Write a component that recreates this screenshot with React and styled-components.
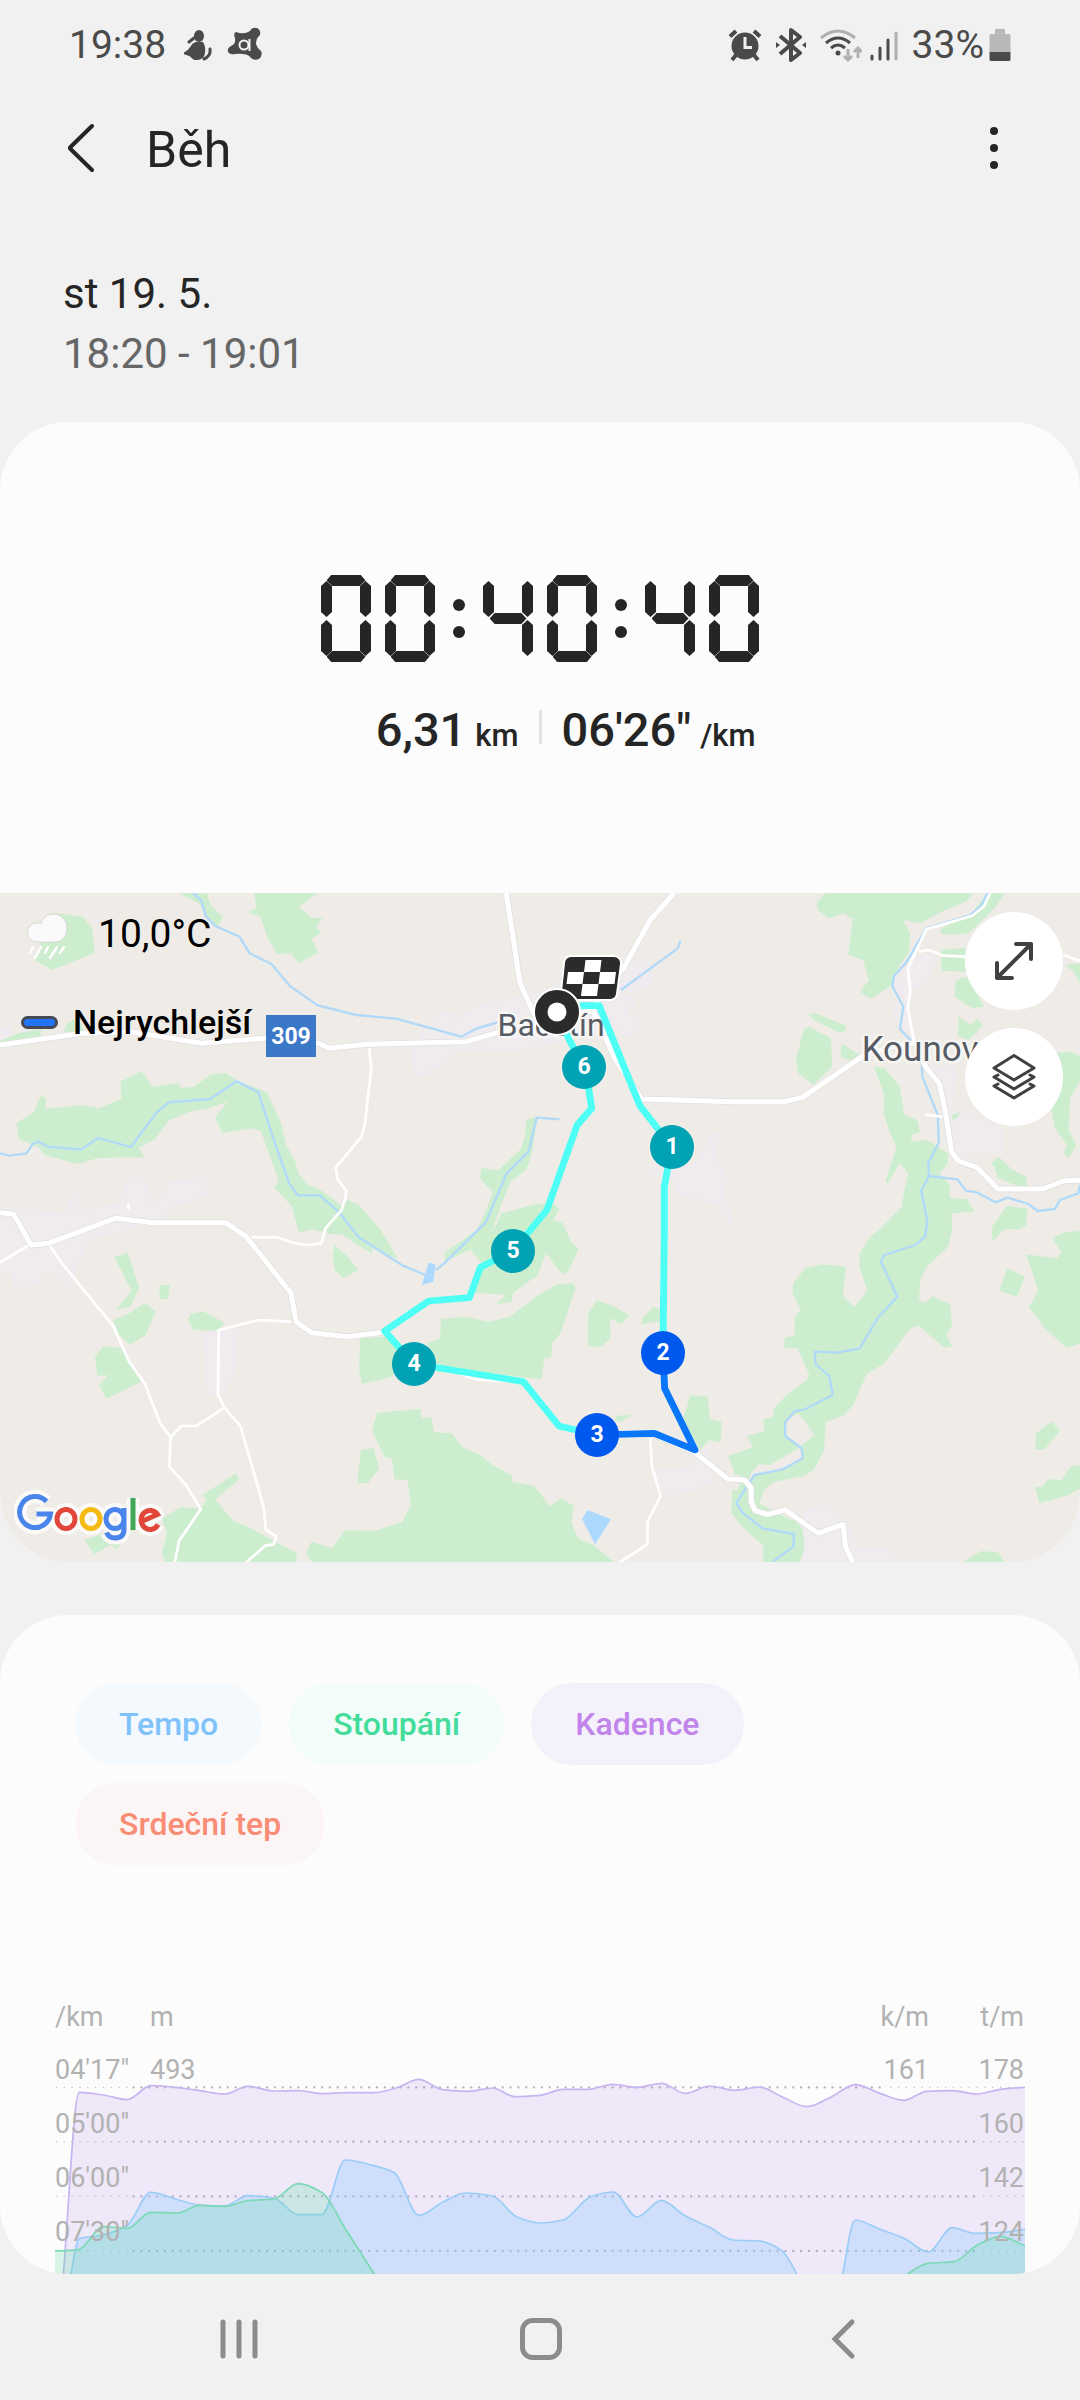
import React from "react";
import styled, { createGlobalStyle } from "styled-components";

const GlobalStyle = createGlobalStyle`
  *, *::before, *::after { box-sizing: border-box; }
  body {
    margin: 0;
    background: #f1f1f1;
    color: #252525;
    font-family: Roboto, "Noto Sans", sans-serif;
  }
  button { font: inherit; color: inherit; border: 0; padding: 0; background: none; cursor: pointer; }
  svg { display: block; }
`;

const Screen = styled.div`
  display: flex;
  flex-direction: column;
  min-height: 100vh;
`;

/* ---------- status bar ---------- */

const StatusBar = styled.div`
  display: flex;
  align-items: center;
  justify-content: space-between;
  height: 90px;
  padding: 0 69px 0 69px;
  color: #4a4a4a;
  font-size: 39px;
  line-height: 44px;
`;

const StatusGroup = styled.div`
  display: flex;
  align-items: center;
  gap: ${(p) => p.$gap}px;
`;

/* ---------- header ---------- */

const AppBar = styled.header`
  display: flex;
  align-items: center;
  height: 115px;
  padding: 0 62px 0 57px;
`;

const IconButton = styled.button`
  display: grid;
  place-items: center;
  width: 48px;
  height: 64px;
`;

const Title = styled.h1`
  flex: 1;
  margin: 0 0 0 41px;
  padding-top: 4px;
  font-size: 50px;
  line-height: 60px;
  font-weight: 400;
`;

const DateBlock = styled.section`
  padding: 59px 63px 38px;
  font-size: 42px;
  line-height: 60px;
`;

const DateLine = styled.div`
  color: ${(p) => (p.$muted ? "#666666" : "#252525")};
`;

/* ---------- cards ---------- */

const Card = styled.section`
  overflow: hidden;
  border-radius: 68px;
  background: #fcfcfc;
  & + & { margin-top: 53px; }
`;

const Summary = styled.div`
  display: flex;
  flex-direction: column;
  align-items: center;
  gap: 38px;
  padding: 153px 0 133px;
`;

const Clock = styled.div`
  display: flex;
  gap: 14px;
`;

const Digit = styled.span`
  display: grid;
  width: 50px;
  height: 87px;
`;

const Bar = styled.i`
  grid-area: 1 / 1;
  justify-self: center;
  align-self: ${(p) => p.$align};
  width: ${(p) => (p.$align === "center" ? 37 : 39)}px;
  height: 11px;
  background: #252525;
  clip-path: ${(p) =>
    p.$align === "start"
      ? "polygon(0 50%, 12% 0, 88% 0, 100% 50%, 85% 100%, 15% 100%)"
      : p.$align === "end"
        ? "polygon(0 50%, 15% 0, 85% 0, 100% 50%, 88% 100%, 12% 100%)"
        : "polygon(0 50%, 14% 0, 86% 0, 100% 50%, 86% 100%, 14% 100%)"};
`;

const Post = styled.i`
  grid-area: 1 / 1;
  justify-self: ${(p) => p.$side};
  align-self: ${(p) => p.$align};
  width: 11px;
  height: 36px;
  margin: 6px 0;
  background: #252525;
  clip-path: polygon(50% 0, 100% 14%, 100% 86%, 50% 100%, 0 86%, 0 14%);
`;

const Colon = styled.span`
  display: flex;
  flex-direction: column;
  align-items: center;
  justify-content: center;
  gap: 15px;
  width: 20px;
  height: 87px;
  &::before, &::after {
    content: "";
    width: 12px;
    height: 12px;
    border-radius: 50%;
    background: #252525;
  }
`;

const Stats = styled.div`
  display: grid;
  grid-template-columns: 1fr 3px 1fr;
  column-gap: 20px;
  width: 100%;
  height: 60px;
  line-height: 60px;
`;

const Stat = styled.div`
  text-align: ${(p) => p.$align};
  font-size: 47px;
  font-weight: 500;
  small { margin-left: 9px; font-size: 31px; line-height: 32px; }
`;

const Divider = styled.span`
  height: 34px;
  margin-top: 10px;
  background: #e3e3e3;
`;

/* ---------- map ---------- */

const MapFrame = styled.div`
  position: relative;
  aspect-ratio: 1080 / 669;
  overflow: hidden;
  background: #efece7;
`;

const MapDrawing = styled.svg`
  width: 100%;
  height: 100%;
`;

const Pin = styled.div`
  position: absolute;
  left: ${(p) => (p.$x / 1080) * 100}%;
  top: ${(p) => (p.$y / 669) * 100}%;
  transform: translate(-50%, -50%);
`;

const KmPin = styled(Pin)`
  display: grid;
  place-items: center;
  width: 44px;
  height: 44px;
  border-radius: 50%;
  background: ${(p) => (p.$fast ? "#0059ef" : "#00a2b4")};
  color: #fff;
  font-size: 23px;
  line-height: 28px;
  font-weight: 700;
`;

const Place = styled(Pin)`
  color: #565b64;
  font-size: ${(p) => p.$size}px;
  line-height: 40px;
  white-space: nowrap;
  text-shadow: 0 0 3px #fff, 2px 2px 2px #f6f5f3, -2px -2px 2px #f6f5f3, 2px -2px 2px #f6f5f3, -2px 2px 2px #f6f5f3;
`;

const RoadSign = styled(Pin)`
  width: 50px;
  height: 42px;
  background: #3b78c8;
  color: #fff;
  font-size: 23px;
  line-height: 43px;
  font-weight: 700;
  text-align: center;
`;

const MapLegend = styled.div`
  position: absolute;
  top: 14px;
  left: 21px;
  display: flex;
  flex-direction: column;
  gap: 41px;
  color: #000;
`;

const Weather = styled.div`
  display: flex;
  align-items: center;
  gap: 23px;
  padding-left: 4px;
  font-size: 39px;
  line-height: 54px;
`;

const PaceKey = styled.div`
  display: flex;
  align-items: center;
  gap: 15px;
  font-size: 34px;
  line-height: 40px;
  font-weight: 500;
  &::before {
    content: "";
    width: 37px;
    height: 13px;
    border: 3px solid #454a55;
    border-radius: 7px;
    background: #2374fb;
  }
`;

const MapTools = styled.div`
  position: absolute;
  top: 19px;
  right: 17px;
  display: flex;
  flex-direction: column;
  gap: 18px;
`;

const RoundButton = styled.button`
  display: grid;
  place-items: center;
  width: 98px;
  height: 98px;
  border-radius: 50%;
  background: #fff;
`;

const Attribution = styled.div`
  position: absolute;
  left: 14px;
  bottom: 15px;
`;

/* ---------- chart card ---------- */

const Chips = styled.div`
  display: flex;
  flex-wrap: wrap;
  gap: 18px 27px;
  padding: 68px 75px 126px;
`;

const Chip = styled.button`
  height: 82px;
  padding: 0 44px;
  border-radius: 41px;
  background: ${(p) => p.$bg};
  color: ${(p) => p.$ink};
  font-size: 32px;
  line-height: 40px;
  font-weight: 500;
`;

const Chart = styled.div`
  padding: 0 55px;
  color: #b2b2b2;
  font-size: 27px;
`;

const AxisRow = styled.div`
  display: grid;
  grid-template-columns: 95px 1fr 1fr 95px;
  height: ${(p) => (p.$head ? 52 : 54)}px;
  line-height: ${(p) => (p.$head ? 52 : 54)}px;
  padding-right: 1px;
  span:nth-child(n + 3) { text-align: right; }
`;

const Plot = styled.div`
  display: grid;
  height: 231px;
`;

const Curves = styled.svg`
  grid-area: 1 / 1;
  align-self: end;
  width: 100%;
  height: 204px;
`;

const AxisLabels = styled.div`
  grid-area: 1 / 1;
  z-index: 1;
`;

/* ---------- navigation ---------- */

const NavBar = styled.nav`
  display: grid;
  grid-template-columns: repeat(3, 1fr);
  height: 126px;
  padding: 4px 86px 0 88px;
`;

const NavButton = styled.button`
  display: grid;
  place-items: center;
`;

/* ---------- seven segment clock ---------- */

const SEGMENTS = { 0: "abcdef", 4: "bcfg" };

function SegmentDigit({ value }) {
  const on = (s) => SEGMENTS[value].includes(s);
  return (
    <Digit>
      {on("a") && <Bar $align="start" />}
      {on("g") && <Bar $align="center" />}
      {on("d") && <Bar $align="end" />}
      {on("f") && <Post $side="start" $align="start" />}
      {on("b") && <Post $side="end" $align="start" />}
      {on("e") && <Post $side="start" $align="end" />}
      {on("c") && <Post $side="end" $align="end" />}
    </Digit>
  );
}

function SegmentClock({ value }) {
  return (
    <Clock role="timer" aria-label={value}>
      {value.split("").map((c, i) => (c === ":" ? <Colon key={i} /> : <SegmentDigit key={i} value={c} />))}
    </Clock>
  );
}

/* ---------- map data: four tiles of 1568 x 1020 units ---------- */

const TILES = [
  {
    at: [0, 0],
    urban: [
      "60,980 180,1000 240,902 225,990 345,970 365,900 395,868 430,920 445,975 495,905 600,883 608,945 500,985 470,1015 340,1060 250,1085 250,1110 195,1225 160,1180 120,1180 115,1210 75,1228 40,1218 30,1180 0,1180 0,980",
      "1190,505 1265,400 1310,390 1325,410 1400,370 1568,335 1808,250 1878,235 1903,300 1860,335 1803,330 1853,360 1820,400 1873,420 1828,475 1768,440 1568,500 1470,515 1330,510 1235,592 1200,590",
      "0,440 35,435 30,475 0,485",
    ],
    green: [
      "520,39 600,39 612,75 648,112 630,140 597,110 580,72",
      "738,39 920,39 868,80 905,113 937,115 918,140 933,157 905,178 923,218 866,250 845,220 805,222 775,170 757,110 723,98 745,82",
      "155,98 240,110 268,145 275,218 152,270 100,240 130,160",
      "185,455 195,430 225,413 245,455",
      "0,482 60,458 120,448 118,472 0,490",
      "48,728 98,697 120,643 135,660 130,687 235,675 285,685 352,658 350,605 412,573 443,620 520,608 523,625 563,620 612,583 655,578 690,603 775,637 815,725 830,795 855,838 868,882 890,912 935,933 990,975 1010,960 1040,972 1105,1050 1157,1138 1080,1105 1080,1122 990,1062 960,1063 910,1048 868,1058 858,1020 848,980 797,922 810,905 757,752 730,745 645,760 625,713 660,665 610,683 550,695 492,720 450,778 402,803 421,832 285,834 225,852 130,825 110,800 55,777",
      "1560,710 1528,720 1525,765 1512,808 1445,872 1398,863 1393,895 1430,935 1412,990 1385,1050 1290,1118 1293,1145 1365,1108 1408,1085 1425,1060 1440,1020 1455,975 1482,905 1530,868 1545,815",
      "1455,1000 1568,970 1605,972 1625,985 1610,1015 1600,1060 1585,1120 1562,1185 1490,1238 1485,1265 1440,1272 1470,1245 1375,1238 1400,1150 1365,1108 1408,1085 1425,1060 1445,1025",
    ],
    water: [
      "560,39 585,62 597,107 625,138 695,170 725,220 788,252 842,318 922,376 1035,405 1150,416 1340,470 1385,445 1445,427",
      "0,820 28,827 77,820 95,792 110,785 140,800 235,809 285,774 380,801 455,697 490,667 610,657 687,604 750,637 800,795 840,910 865,946 928,946 985,997 1040,1070 1170,1157 1235,1185",
      "1265,1170 1290,1150 1412,1025 1470,882 1535,815 1558,713 1625,718",
    ],
    road: [
      "0,495 240,460 380,455 585,490 770,475 925,490 955,505 1065,493 1355,485 1445,457 1568,425 1730,390",
      "1470,39 1510,310 1568,440",
      "0,998 40,1003 90,1095 140,1090 335,1015 445,1028 655,1028 715,1070 845,1240 860,1325 905,1358 1010,1370 1117,1356",
    ],
    lane: [
      "1072,505 1078,565 1060,730 1050,770 975,862 980,897 1005,932 1003,955 992,990 945,1045 933,1090 890,1095 845,1087 805,1072 728,1072",
      "373,970 373,988",
    ],
  },
  {
    at: [1568, 0],
    urban: [
      "500,755 520,760 515,830 545,885 535,960 565,1010 555,1040 515,975 400,945 380,895 300,880 330,860 440,860",
      "1085,240 1150,215 1150,250 1110,320 1075,330 1075,400 1090,470 1060,450 1020,400 1040,360 1025,310",
      "1120,560 1210,555 1205,640 1190,700 1250,690 1290,720 1345,745 1345,820 1250,820 1220,870 1190,800 1170,640",
    ],
    green: [
      "830,39 1260,39 1235,65 1165,95 1105,130 1055,120 1075,160 1072,215 1040,262 1022,315 960,357 930,335 955,300 938,240 895,225 908,118 882,100 838,115 805,88 805,65",
      "1165,210 1235,203 1245,275 1165,273",
      "1165,145 1250,103 1300,39 1350,39 1320,85 1245,160 1200,165 1163,160",
      "1208,300 1240,290 1290,380 1255,385 1203,350",
      "1215,410 1250,435 1270,415 1287,437 1245,480 1215,470",
      "778,402 800,400 885,435 890,452 870,458 800,422",
      "765,450 780,440 845,475 848,560 795,615 750,580 743,540",
      "875,490 935,530 900,540 872,530",
      "970,560 1000,565 1045,620 1058,705 1095,720 1103,755 1080,765 1078,785 1125,780 1185,820 1185,850 1160,880 1190,915 1190,955 1240,958 1262,995 1195,1000 1197,1050 1185,1100 1120,1165 1105,1200 1100,1260 1120,1268 1140,1248 1190,1272 1197,1335 1180,1365 1197,1400 1175,1403 1100,1338 1075,1345 1000,1450 948,1483 910,1575 880,1608 830,1625 825,1710 795,1770 765,1788 680,1805 650,1830 637,1870 700,1905 745,1925 763,1950 768,2005 755,2046 648,2046 648,1995 600,1955 555,1900 558,1832 575,1830 585,1785 567,1785 547,1728 620,1700 600,1668 652,1653 648,1618 675,1612 680,1585 715,1545 775,1500 782,1485 748,1405 710,1405 710,1375 740,1365 740,1310 758,1290 733,1240 735,1210 770,1165 820,1153 888,1160 880,1248 912,1282 950,1232 928,1160 928,1120 955,1075 985,1050 1050,980 1058,930 1070,880 1045,850 1010,910 1003,905 1035,800 1015,755 998,700 998,640",
      "1500,518 1545,515 1568,530 1568,605 1540,650 1535,750 1558,795 1535,833 1520,820 1530,795 1495,745 1485,690 1505,640 1510,580",
      "1320,860 1308,850 1333,830 1370,868 1412,890 1415,918 1385,918 1330,895",
      "1195,705 1222,697 1200,725",
      "1355,978 1415,985 1412,1035 1395,1048 1350,1048 1313,1085 1313,1040",
      "1525,255 1568,250 1568,310 1550,275",
    ],
    water: [
      "235,330 400,205 408,183",
      "1300,39 1282,75 1250,105 1122,145 1065,245 1028,288 1023,318 1055,380 1045,447 1085,490 1108,530 1110,590 1155,705 1158,787 1127,850 1130,888 1107,932 1125,1025 1118,1070 1090,1095 1000,1125 990,1145 1038,1250 980,1315 928,1405 865,1418 798,1415 800,1452 840,1488 850,1545 770,1588 740,1593 712,1627 712,1668 760,1705 763,1735 705,1768 623,1785 597,1825 570,1870 590,1900 648,1946 738,1962 735,2000 675,2046",
      "1130,888 1212,898 1237,932 1268,937 1323,967 1358,953 1418,972 1445,993 1495,987 1510,960 1563,940 1568,915",
    ],
    road: [
      "390,39 320,120 245,260 150,385 220,540 295,657 560,665 710,665 762,652 935,530 1020,500 1085,490",
      "1085,480 1120,560 1160,612 1178,700 1195,815 1215,843 1270,863 1330,927 1460,927 1520,903 1568,900",
    ],
    lane: [
      "1307,39 1290,78 1255,107 1122,148 1068,265 1075,330 1068,385 1085,480",
      "1100,215 1130,210 1170,227 1235,230",
      "1520,225 1568,243",
      "1118,703 1170,711",
    ],
  },
  {
    at: [0, 1020],
    urban: ["588,340 695,322 685,460 650,525 600,520"],
    green: [
      "1240,370 1278,355 1280,297 1350,290 1420,305 1480,290 1568,222 1618,192 1665,190 1671,205 1628,338 1603,370 1601,410 1580,418 1573,478 1535,475 1265,435",
      "1045,355 1120,350 1160,385 1140,470 1052,492 1043,455",
      "332,110 372,98 404,203 378,262 335,270 382,213",
      "463,195 493,195 488,238 463,238",
      "328,300 378,278 423,248 452,275 423,345 378,374 345,345",
      "275,410 300,379 350,383 410,485 310,536 287,495 315,465 283,468",
      "545,300 553,282 590,274 652,308 635,332 562,330",
      "965,105 972,75 1010,110 1040,150 997,175 973,152",
      "1095,578 1220,567 1225,595 1252,592 1260,637 1312,640 1345,683 1395,705 1430,735 1485,765 1488,785 1552,798 1596,858 1628,835 1666,858 1660,908 1678,955 1723,975 1783,1026 905,1026 890,1000 903,965 963,985 1003,930 1090,932 1168,905 1193,855 1183,780 1145,778 1138,715 1118,712 1080,632",
      "1048,690 1085,684 1101,745 1068,790 1037,790",
      "588,825 685,760 695,778 625,838 680,905 720,920 862,1000 860,1026 480,1026 470,1000 485,940 470,895 525,862 583,865 600,840",
      "245,960 300,940 360,955 340,988 320,975 275,1003",
    ],
    water: [],
    pond: ["1245,128 1265,133 1258,185 1225,195 1235,160"],
    road: [],
    lane: [
      "0,128 80,78",
      "145,78 180,130 330,320 375,425 420,490 465,610 495,652 492,740 540,795 583,868 520,962 507,1030",
      "495,652 527,618 570,618 652,563",
      "845,305 752,300 635,330 633,525 652,563 698,618 735,750 765,860 772,928 802,950 795,973 770,977 712,1030",
      "1270,435 1380,478 1520,487",
    ],
  },
  {
    at: [1568, 1020],
    urban: [
      "330,750 440,740 480,680 500,720 500,790 430,820 360,828",
      "765,870 840,848 880,890 915,950 925,985 1010,980 1045,1026 765,1026",
    ],
    green: [
      "40,0 65,8 90,65 112,88 85,150 65,163 17,100 25,40",
      "1488,55 1520,38 1568,32 1568,370 1530,385 1465,325 1420,262 1447,212 1412,103 1500,115 1515,98",
      "1357,145 1407,170 1385,230 1333,213",
      "1440,640 1485,605 1510,632 1465,688 1438,688",
      "1438,802 1460,800 1475,778 1515,780 1540,740 1568,735 1568,805 1535,825 1450,850",
      "1230,1026 1280,993 1330,997 1350,1026",
      "140,380 140,280 165,240 220,262 260,287 237,312 203,295 205,355 178,380",
      "293,312 300,290 330,260 350,270 350,302",
      "437,525 487,530 493,597 527,605 525,667 490,660 465,690 415,600",
      "215,600 225,587 270,583 235,605",
    ],
    clearing: [
      "750,580 797,645 755,680 712,645 712,605",
      "755,682 760,715 700,750 620,765 605,785 612,760 635,733 668,735",
    ],
    pond: ["138,870 206,898 160,973 122,897"],
    water: [],
    road: [
      "332,645 450,697 545,777 595,780 613,805 613,845 625,872 660,883 712,870 808,940 880,913 887,980 910,1030",
    ],
    lane: ["320,655 325,740 350,828 313,903 312,973 230,1028"],
  },
];

const at = (t) => `translate(${t.at[0]} ${t.at[1]})`;

function Shapes({ layer, fill }) {
  return TILES.map((t, i) => (
    <g key={i} transform={at(t)} fill={fill}>
      {(t[layer] || []).map((points) => <polygon key={points} points={points} />)}
    </g>
  ));
}

function Lines({ layer, stroke, width }) {
  return TILES.map((t, i) => (
    <g key={i} transform={at(t)} fill="none" stroke={stroke} strokeWidth={width} strokeLinejoin="round">
      {(t[layer] || []).map((points) => <polyline key={points} points={points} />)}
    </g>
  ));
}

const ROUTE = [
  ["#4dfff5", "1618,395 1688,377 1740,377 1858,677 1913,750 1951,800 1938,870 1929,920 1929,1050 1925,1420"],
  ["#4dfff5", "1734,1665 1623,1638 1520,1505 1270,1463 1202,1452 1117,1353 1245,1263 1363,1253 1395,1162 1490,1113 1588,990 1676,735 1718,685 1710,630 1696,560 1653,480 1618,395"],
  ["#0a76fa", "1925,1420 1930,1525 2018,1710 1900,1660 1734,1665"],
];

const KM_PINS = [
  { km: 1, x: 672, y: 254 },
  { km: 2, x: 663, y: 460, fast: true },
  { km: 3, x: 597, y: 542, fast: true },
  { km: 4, x: 414, y: 471 },
  { km: 5, x: 513, y: 358 },
  { km: 6, x: 584, y: 174 },
];

function FinishFlag() {
  return (
    <svg width="62" height="48" viewBox="0 0 62 48">
      <path d="M11 2h43a7 7 0 0 1 7 8l-4 30a7 7 0 0 1-7 6H8a7 7 0 0 1-7-8L4 9a7 7 0 0 1 7-7z" fill="#2b2b2b" stroke="#fff" strokeWidth="2" />
      <g fill="#fff">
        <path d="M25.500 6h16l-1.500 12h-16z" />
        <path d="M8 18h16l-1.500 12h-16z" />
        <path d="M40 18h16l-1.500 12h-16z" />
        <path d="M22.500 30h16L37 42H21z" />
      </g>
    </svg>
  );
}

function StartMark() {
  return (
    <svg width="50" height="50" viewBox="0 0 50 50">
      <circle cx="25" cy="25" r="23" fill="#2b2b2b" stroke="#fff" strokeWidth="2" />
      <circle cx="25" cy="25" r="9.500" fill="#fff" />
    </svg>
  );
}

function RainCloud() {
  return (
    <svg width="50" height="54" viewBox="0 0 50 54">
      <g stroke="#d9d8d4" strokeWidth="1">
        <path d="M12 35a9 9.500 0 0 1-1-19c2 0 3 0 5 .5C18 10 23 7 28 7c8 0 14 6 14 14S37 35 30 35z" fill="#fafafa" />
      </g>
      <g stroke="#fff" strokeWidth="2.500" strokeLinecap="round">
        <path d="M8 40l-3 6M16 40l-6 11M23 40l-3 6M32 40l-7 11M39 40l-4 6" />
      </g>
    </svg>
  );
}

function GoogleLogo() {
  const parts = [
    ["#4a85ec", "M32.500 12.500A15.500 15.500 0 1 0 36.500 25H22.500"],
    ["#e04639", "M61 30a9 9.500 0 1 1-18 0a9 9.500 0 1 1 18 0z"],
    ["#f6bb12", "M86 30a9 9.500 0 1 1-18 0a9 9.500 0 1 1 18 0z"],
    ["#4a85ec", "M110 30a9 9.500 0 1 1-18 0a9 9.500 0 1 1 18 0zM110 19V40Q110 49 101 49Q95 49 92.500 43.500"],
    ["#3fa757", "M119 9V41"],
    ["#e04639", "M144 35.500A9 9.500 0 1 1 143.500 25.500L127.500 32.500"],
  ];
  return (
    <svg width="152" height="58" viewBox="0 0 152 58" fill="none" role="img" aria-label="Google">
      <g stroke="#fbfaf8" strokeWidth="13" strokeLinejoin="round">
        {parts.map(([, d]) => <path key={d} d={d} />)}
      </g>
      <g strokeWidth="5">
        {parts.map(([color, d]) => <path key={d} d={d} stroke={color} />)}
      </g>
    </svg>
  );
}

const RouteSvg = styled.svg`
  position: absolute;
  inset: 0;
  width: 100%;
  height: 100%;
`;

function RouteLayer() {
  return (
    <RouteSvg viewBox="0 39 3136 2007" preserveAspectRatio="none" aria-hidden="true">
      {ROUTE.map(([color, points]) => (
        <polyline key={points} points={points} fill="none" stroke={color} strokeWidth="20" strokeLinejoin="round" />
      ))}
    </RouteSvg>
  );
}

function RouteMap() {
  return (
    <MapFrame>
      <MapDrawing viewBox="0 39 3136 2007" preserveAspectRatio="none" aria-hidden="true">
        <Shapes layer="urban" fill="#efebee" />
        <Shapes layer="green" fill="#cdeece" />
        <Shapes layer="clearing" fill="#efece7" />
        <Lines layer="water" stroke="#b1d9f8" width={7} />
        <Shapes layer="pond" fill="#add9ff" />
        <Lines layer="lane" stroke="#ffffff" width={8} />
        <Lines layer="road" stroke="#dfdddd" width={19} />
        <Lines layer="road" stroke="#ffffff" width={15} />
      </MapDrawing>
      <Place $x={551} $y={132} $size={32}>Bačetín</Place>
      <Place $x={920} $y={157} $size={35}>Kounov</Place>
      <RoadSign $x={291} $y={143}>309</RoadSign>
      <RouteLayer />
      {KM_PINS.map((p) => (
        <KmPin key={p.km} $x={p.x} $y={p.y} $fast={p.fast}>{p.km}</KmPin>
      ))}
      <Pin $x={591} $y={85}><FinishFlag /></Pin>
      <Pin $x={557} $y={119}><StartMark /></Pin>
      <MapLegend>
        <Weather><RainCloud />10,0°C</Weather>
        <PaceKey>Nejrychlejší</PaceKey>
      </MapLegend>
      <MapTools>
        <RoundButton aria-label="Zvětšit mapu">
          <svg width="40" height="40" viewBox="0 0 40 40" fill="none" stroke="#404040" strokeWidth="4" strokeLinecap="round" strokeLinejoin="round">
            <path d="M3 37L37 3M22 3h15v15M3 22v15h15" />
          </svg>
        </RoundButton>
        <RoundButton aria-label="Vrstvy mapy">
          <svg width="46" height="46" viewBox="0 0 46 46" fill="none" stroke="#404040" strokeWidth="3" strokeLinecap="round" strokeLinejoin="round">
            <path d="M23 1.500L43 14L23 26L3 14z" />
            <path d="M7 21l-4 2l20 12l20-12l-4-2" />
            <path d="M7 30l-4 2l20 12l20-12l-4-2" />
          </svg>
        </RoundButton>
      </MapTools>
      <Attribution><GoogleLogo /></Attribution>
    </MapFrame>
  );
}

/* ---------- chart ---------- */

const CADENCE = [[183, 930], [230, 367], [300, 375], [370, 389], [438, 347], [510, 352], [580, 362], [652, 372], [720, 349], [795, 363], [866, 362], [935, 371], [1005, 368], [1085, 368], [1150, 354], [1216, 328], [1285, 359], [1360, 364], [1430, 354], [1495, 380], [1568, 376], [1635, 358], [1710, 358], [1778, 343], [1850, 352], [1920, 340], [1990, 370], [2060, 348], [2133, 361], [2205, 351], [2270, 380], [2343, 410], [2415, 380], [2483, 344], [2555, 370], [2625, 391], [2690, 364], [2765, 362], [2838, 372], [2905, 358], [2976, 352]];
const PACE = [
  [[203, 930], [230, 806], [300, 795], [370, 765], [438, 667], [510, 687], [580, 705], [652, 708], [720, 677], [795, 684], [866, 734], [935, 734], [1003, 570], [1085, 587], [1145, 608], [1216, 736], [1285, 697], [1350, 669], [1430, 678], [1500, 740], [1568, 759], [1635, 750], [1715, 680], [1780, 666], [1850, 741], [1920, 691], [1990, 738], [2060, 772], [2128, 810], [2205, 813], [2270, 842], [2323, 930]],
  [[2443, 930], [2483, 750], [2555, 778], [2625, 805], [2695, 846], [2765, 773], [2830, 790], [2900, 788], [2976, 778]],
];
const CLIMB = [
  [[160, 843], [195, 842], [230, 838], [300, 770], [370, 775], [438, 727], [515, 729], [580, 706], [652, 709], [720, 692], [795, 687], [866, 641], [935, 668], [1005, 780], [1095, 925]],
  [[2615, 925], [2695, 880], [2770, 875], [2838, 825], [2905, 799], [2976, 828]],
];

/* Monotone cubic interpolation through the samples. */
function smooth(points) {
  const slope = (a, b) => (b[1] - a[1]) / (b[0] - a[0]);
  const tangent = (i) => {
    if (i === 0) return slope(points[0], points[1]);
    if (i === points.length - 1) return slope(points[i - 1], points[i]);
    const s0 = slope(points[i - 1], points[i]);
    const s1 = slope(points[i], points[i + 1]);
    return s0 * s1 <= 0 ? 0 : (2 * s0 * s1) / (s0 + s1);
  };
  return points
    .map(([x, y], i) => {
      if (i === 0) return `M${x} ${y}`;
      const [px, py] = points[i - 1];
      const h = (x - px) / 3;
      return `C${px + h} ${py + tangent(i - 1) * h} ${x - h} ${y - tangent(i) * h} ${x} ${y}`;
    })
    .join("");
}

function Series({ points, fill, stroke }) {
  const line = smooth(points);
  return (
    <>
      <path d={`${line}V940H${points[0][0]}z`} fill={fill} />
      <path d={line} fill="none" stroke={stroke} strokeWidth="5" />
    </>
  );
}

function GridLine({ y, right }) {
  const dots = { stroke: "#b5b2bd", strokeLinecap: "round" };
  return (
    <g {...dots}>
      <path d={`M164 ${y}H375`} strokeWidth="4" strokeDasharray="0 22.8" />
      <path d={`M388 ${y}H${right}`} strokeWidth="7" strokeDasharray="0 22.8" />
      <path d={`M${right + 16} ${y}H2976`} strokeWidth="4" strokeDasharray="0 22.8" />
    </g>
  );
}

const AXIS_ROWS = [
  ["04'17\"", "493", "161", "178"],
  ["05'00\"", "", "", "160"],
  ["06'00\"", "", "", "142"],
  ["07'30\"", "", "", "124"],
];

function WorkoutChart() {
  return (
    <Chart>
      <AxisRow $head>
        {["/km", "m", "k/m", "t/m"].map((t) => <span key={t}>{t}</span>)}
      </AxisRow>
      <Plot>
        <Curves viewBox="160 300 2816 612" preserveAspectRatio="none" aria-hidden="true">
          <GridLine y={352} right={2570} />
          <GridLine y={515} right={2840} />
          <GridLine y={679} right={2840} />
          <GridLine y={843} right={2840} />
          <Series points={CADENCE} fill="rgba(170,130,235,.16)" stroke="#c6b5ee" />
          {PACE.map((p) => <Series key={p[0][0]} points={p} fill="rgba(149,207,255,.35)" stroke="#9bcdf6" />)}
          {CLIMB.map((p) => <Series key={p[0][0]} points={p} fill="rgba(87,219,161,.22)" stroke="#7cd8b5" />)}
        </Curves>
        <AxisLabels>
          {AXIS_ROWS.map((row) => (
            <AxisRow key={row[0]}>
              {row.map((t, i) => <span key={i}>{t}</span>)}
            </AxisRow>
          ))}
        </AxisLabels>
      </Plot>
    </Chart>
  );
}

const SERIES_CHIPS = [
  { label: "Tempo", ink: "#80c3fb", bg: "#f4f9fd" },
  { label: "Stoupání", ink: "#43dc9b", bg: "#f2fdf9" },
  { label: "Kadence", ink: "#c084ea", bg: "#f5f1fb" },
  { label: "Srdeční tep", ink: "#f98c75", bg: "#fcf5f5" },
];

/* ---------- status icons ---------- */

function SystemIcons() {
  return (
    <StatusGroup $gap={14}>
      <svg width="34" height="34" viewBox="0 0 34 34" fill="none" stroke="#4a4a4a" strokeLinecap="butt">
        <circle cx="17" cy="18" r="13.500" fill="#4a4a4a" stroke="none" />
        <path d="M2 8.500L8 3M26 3l6 5.500" strokeWidth="4" />
        <path d="M8 27l-4 5M26 27l4 5" strokeWidth="4" />
        <path d="M17 9v10.500h7" stroke="#f1f1f1" strokeWidth="3" />
      </svg>
      <svg width="30" height="34" viewBox="0 0 30 34" fill="none" stroke="#4a4a4a" strokeWidth="4">
        <path d="M4 8l20 17l-9 7V2l9 7L4 26" strokeLinejoin="round" />
        <path d="M0 14l4 3l-4 3zM30 14l-4 3l4 3z" fill="#4a4a4a" stroke="none" />
      </svg>
      <StatusGroup $gap={8}>
        <svg width="42" height="34" viewBox="0 0 42 34" fill="none" strokeWidth="3">
          <path d="M1 10Q18-4 35 10" stroke="#b0b0b0" />
          <path d="M6 15Q18 5 30 15" stroke="#4a4a4a" />
          <path d="M11 20Q18 14 25 20" stroke="#4a4a4a" />
          <circle cx="18" cy="25" r="2.500" fill="#4a4a4a" stroke="none" />
          <path d="M28 21v10M24 28l4 4l4-4M38 30V20M34 24l4-4l4 4" stroke="#b0b0b0" />
        </svg>
        <svg width="28" height="34" viewBox="0 0 28 34" stroke="#4a4a4a" strokeWidth="3" strokeLinecap="round">
          <path d="M2 28v3M10 20v11M18 12v19" />
          <path d="M26 5v26" stroke="#b0b0b0" />
        </svg>
      </StatusGroup>
      <StatusGroup $gap={5}>
        <span>33%</span>
        <svg width="22" height="34" viewBox="0 0 22 34" fill="#b8b8b8">
          <path d="M6 1h10v5h4a1.500 1.500 0 0 1 1.500 1.500V24H.5V7.500A1.500 1.500 0 0 1 2 6h4z" />
          <path d="M.5 24h21v7.500A1.500 1.500 0 0 1 20 33H2a1.500 1.500 0 0 1-1.500-1.500z" fill="#4a4a4a" />
        </svg>
      </StatusGroup>
    </StatusGroup>
  );
}

function AppIcons() {
  return (
    <StatusGroup $gap={15}>
      <svg width="28" height="34" viewBox="0 0 28 34" fill="none" stroke="#4a4a4a" strokeLinecap="round">
        <ellipse cx="15" cy="8" rx="5" ry="6" fill="#4a4a4a" stroke="none" />
        <path d="M11 14h8q3 5 2 11q-1 7-8 7q-6 0-7-7z" fill="#4a4a4a" stroke="none" />
        <path d="M10 10l-5 4" strokeWidth="3" />
        <path d="M10 17q-4 6-7 8q4 1 8 5" strokeWidth="4" />
        <path d="M20 31q7-3 6-10" strokeWidth="3" />
      </svg>
      <svg width="36" height="36" viewBox="0 0 36 36">
        <path d="M9 5q8 3 14-1q2-4 7-3q4 2 3 7q-4 3-4 9q1 4 5 7q2 5-2 8q-5 2-8-1q-3-5-16-4q-5 1-7-2q-1-4 3-6q5-2 4-8q-2-5 1-6z" fill="#4a4a4a" />
        <circle cx="17" cy="18" r="4.500" fill="none" stroke="#f1f1f1" strokeWidth="2" />
        <path d="M22.500 12v12" stroke="#f1f1f1" strokeWidth="2" />
      </svg>
    </StatusGroup>
  );
}

export default function App() {
  return (
    <Screen>
      <GlobalStyle />
      <StatusBar>
        <StatusGroup $gap={18}>
          <span>19:38</span>
          <AppIcons />
        </StatusGroup>
        <SystemIcons />
      </StatusBar>
      <AppBar>
        <IconButton aria-label="Zpět">
          <svg width="28" height="52" viewBox="0 0 28 52" fill="none" stroke="#252525" strokeWidth="4" strokeLinecap="round" strokeLinejoin="round">
            <path d="M25 4L3.500 25Q2.500 26 3.500 27L25 48" />
          </svg>
        </IconButton>
        <Title>Běh</Title>
        <IconButton aria-label="Další možnosti">
          <svg width="10" height="44" viewBox="0 0 10 44" fill="#252525">
            <circle cx="5" cy="5" r="4" />
            <circle cx="5" cy="22" r="4" />
            <circle cx="5" cy="39" r="4" />
          </svg>
        </IconButton>
      </AppBar>
      <main>
        <DateBlock>
          <DateLine>st 19. 5.</DateLine>
          <DateLine $muted>18:20 - 19:01</DateLine>
        </DateBlock>
        <Card>
          <Summary>
            <SegmentClock value="00:40:40" />
            <Stats>
              <Stat $align="right">6,31<small>km</small></Stat>
              <Divider />
              <Stat $align="left">06'26"<small>/km</small></Stat>
            </Stats>
          </Summary>
          <RouteMap />
        </Card>
        <Card>
          <Chips>
            {SERIES_CHIPS.map((c) => (
              <Chip key={c.label} $ink={c.ink} $bg={c.bg} aria-pressed="true">{c.label}</Chip>
            ))}
          </Chips>
          <WorkoutChart />
        </Card>
      </main>
      <NavBar>
        <NavButton aria-label="Poslední aplikace">
          <svg width="40" height="42" viewBox="0 0 40 42" stroke="#8c8c8c" strokeWidth="5" strokeLinecap="round">
            <path d="M4 4v34M20 4v34M36 4v34" />
          </svg>
        </NavButton>
        <NavButton aria-label="Domů">
          <svg width="44" height="44" viewBox="0 0 44 44" fill="none" stroke="#8c8c8c" strokeWidth="5">
            <rect x="3.500" y="3.500" width="37" height="37" rx="10" />
          </svg>
        </NavButton>
        <NavButton aria-label="Zpět">
          <svg width="26" height="42" viewBox="0 0 26 42" fill="none" stroke="#8c8c8c" strokeWidth="5" strokeLinecap="round">
            <path d="M22 4L5 21L22 38" />
          </svg>
        </NavButton>
      </NavBar>
    </Screen>
  );
}
